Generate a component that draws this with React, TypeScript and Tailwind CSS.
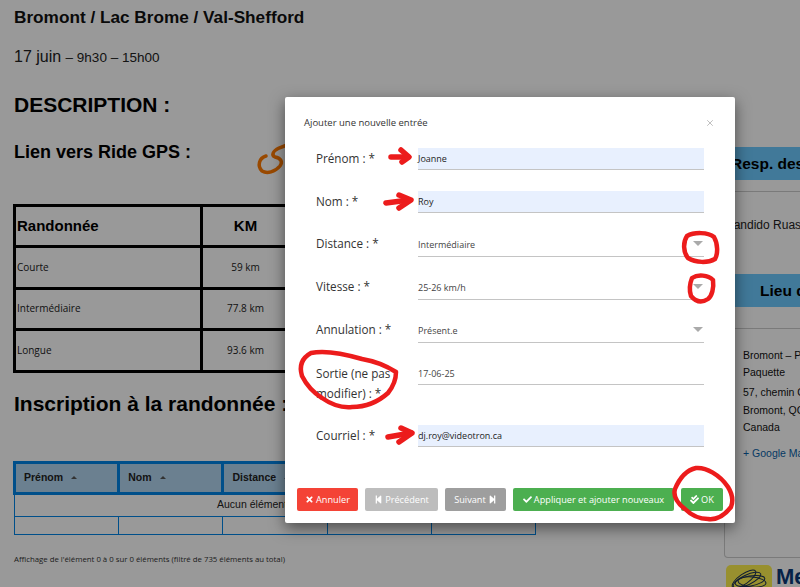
import { FaTimes, FaStepBackward, FaStepForward, FaCheck, FaCheckDouble } from 'react-icons/fa';
import { X } from 'lucide-react';
import type { ReactNode } from 'react';

function Sort() {
  return <span className="ml-2 inline-block align-middle w-0 h-0 border-x-[3px] border-x-transparent border-b-[3px] border-b-[#555]" />;
}

function Caret() {
  return <span className="mb-[2px] w-0 h-0 border-x-[5px] border-x-transparent border-t-[5px] border-t-[#aaa]" />;
}

function Field({ label, value, filled, caret, rowCls }: { label: ReactNode; value: string; filled?: boolean; caret?: boolean; rowCls: string }) {
  return (
    <div className={`flex items-start ${rowCls}`}>
      <div className="w-[102px] text-[11.7px] leading-[20px] text-[#333]">{label}</div>
      <div className={`w-[286px] flex items-center justify-between border-b border-[#c4c4c4] text-[9px] ${caret ? 'h-[24px]' : 'h-[22px]'} ${filled ? 'bg-[#e8f0fe] text-[#222]' : 'text-[#444]'}`}>
        <span>{value}</span>
        {caret && <span className="mr-[1px] flex"><Caret /></span>}
      </div>
    </div>
  );
}

function Btn({ cls, children }: { cls: string; children: ReactNode }) {
  return (
    <button className={`h-[23px] rounded-[2px] flex items-center justify-center gap-[2px] text-[9.2px] font-medium text-white ${cls}`}>
      {children}
    </button>
  );
}

export default function App() {
  const rows = [['Courte', '59 km'], ['Intermédiaire', '77.8 km'], ['Longue', '93.6 km']];

  return (
    <div className="relative w-[800px] h-[587px] overflow-hidden bg-white font-['Liberation_Sans',sans-serif] text-black">
      {/* page behind the dialog */}
      <div className="flex w-[1100px]">
        <div className="w-[724px] shrink-0 pl-[14px]">
          <div className="pt-[8px] text-[17.2px] leading-[18px] font-bold text-[#111]">Bromont / Lac Brome / Val-Shefford</div>
          <div className="mt-[22px] text-[16px] leading-[18px] text-[#222]">
            17 juin <span className="text-[13.5px]">– 9h30 – 15h00</span>
          </div>
          <div className="mt-[26px] text-[21px] leading-[24px] font-bold">DESCRIPTION :</div>
          <div className="mt-[25px] flex h-[36px] items-start">
            <span className="text-[18px] leading-[20px] font-bold">Lien vers Ride GPS :</span>
            <svg className="ml-[60px] -mt-[4px]" width="40" height="40" viewBox="0 0 40 40" fill="none" stroke="#ff7a00" strokeWidth="3.5" strokeLinecap="round">
              <path d="M15 18C8 20 6 28 11 33C16 36 24 34 29 28C32 24 30 20 24 19C20 17 22 13 28 10L36 7" />
            </svg>
          </div>

          <table className="-ml-px mt-[26px] w-[680px] border-collapse border-[3px] border-black">
            <thead>
              <tr className="h-[41px]">
                <th className="w-[187px] border-[3px] border-black pl-px text-left text-[15px] font-bold">Randonnée</th>
                <th className="w-[88px] border-[3px] border-black text-center text-[15px] font-bold">KM</th>
                <th className="border-[3px] border-black" />
              </tr>
            </thead>
            <tbody>
              {rows.map(([name, km]) => (
                <tr key={name} className="h-[41.5px] font-['Open_Sans',sans-serif] text-[10px] text-[#222]">
                  <td className="border-[3px] border-black pl-px">{name}</td>
                  <td className="border-[3px] border-black text-center">{km}</td>
                  <td className="border-[3px] border-black" />
                </tr>
              ))}
            </tbody>
          </table>

          <div className="mt-[19px] text-[21px] leading-[24px] font-bold">Inscription à la randonnée :</div>

          <table className="-ml-px mt-[45px] w-[524px] table-fixed border-collapse text-[10.5px]">
            <thead>
              <tr className="h-[31px] bg-[#b2d5f0] text-left font-bold text-[#222]">
                <th className="border-[3px] border-[#0084e6] pl-[8px]">Prénom<Sort /></th>
                <th className="border-[3px] border-[#0084e6] pl-[8px]">Nom<Sort /></th>
                <th className="border-[3px] border-[#0084e6] pl-[8px]">Distance<Sort /></th>
                <th className="border-[3px] border-[#0084e6]" />
                <th className="border-[3px] border-[#0084e6]" />
              </tr>
            </thead>
            <tbody>
              <tr className="h-[23px]">
                <td colSpan={5} className="border border-[#0084e6] text-center text-[#222]">Aucun élément à afficher</td>
              </tr>
              <tr className="h-[18px]">
                <td className="border border-[#0084e6]" />
                <td className="border border-[#0084e6]" />
                <td className="border border-[#0084e6]" />
                <td className="border border-[#0084e6]" />
                <td className="border border-[#0084e6]" />
              </tr>
            </tbody>
          </table>
          <div className="mt-[19px] font-['Open_Sans',sans-serif] text-[7.8px] leading-[11px] text-[#333]">
            Affichage de l'élément 0 à 0 sur 0 éléments (filtré de 735 éléments au total)
          </div>
        </div>

        <div className="w-[300px] shrink-0 pt-[147px]">
          <div className="h-[411px] rounded-b-[4px] border-x border-b border-[#ccc]">
            <div className="h-[33px] bg-[#6dcaff] pl-[6px] text-[15.5px] leading-[33px] font-bold whitespace-nowrap">Resp. des randonnées</div>
            <div className="mt-[11px] border-t border-[#ccc] pt-[26px] text-[12px] leading-[14px] whitespace-nowrap text-[#222]">Candido Ruas</div>
            <div className="mt-[42px] h-[33px] bg-[#6dcaff] pl-[35px] text-[15.5px] leading-[33px] font-bold whitespace-nowrap">Lieu de départ</div>
            <div className="mt-[21px] border-t border-[#ccc] pl-[18px] pt-[18px] text-[10.5px] leading-[17px] whitespace-nowrap text-[#111]">
              <div>Bromont – Parc</div>
              <div>Paquette</div>
              <div className="mt-[3px]">57, chemin Compton</div>
              <div className="mt-[1px]">Bromont, QC</div>
              <div>Canada</div>
              <div className="mt-[9px] text-[#0a5fa8]">+ Google Maps</div>
            </div>
          </div>
          <div className="mt-[7px] flex items-start gap-[4px] pl-[2px]">
            <svg width="46" height="46" viewBox="0 0 46 46" fill="none" className="shrink-0">
              <rect width="46" height="46" rx="5" fill="#fdf04f" />
              <g stroke="#1a2f55" strokeWidth="1">
                <ellipse cx="18" cy="14" rx="14" ry="5" transform="rotate(-35 18 14)" />
                <ellipse cx="21" cy="15" rx="15" ry="5" transform="rotate(-25 21 15)" />
                <ellipse cx="24" cy="16" rx="15" ry="5" transform="rotate(-10 24 16)" />
                <ellipse cx="26" cy="17" rx="14" ry="5" transform="rotate(5 26 17)" />
              </g>
            </svg>
            <span className="text-[22px] leading-[24px] font-bold text-[#0a3a78]">Me</span>
          </div>
        </div>
      </div>

      {/* backdrop */}
      <div className="absolute inset-0 bg-black/40" />

      {/* dialog */}
      <div className="absolute left-[285px] top-[97px] flex h-[426px] w-[450px] flex-col rounded-[2px] bg-white font-['Open_Sans',sans-serif] shadow-[0_5px_15px_rgba(0,0,0,0.5)]">
        <div className="flex items-center justify-between pl-[19px] pr-[20px] pt-[19px] text-[#333]">
          <span className="text-[9.5px] leading-[13px]">Ajouter une nouvelle entrée</span>
          <X size={10} strokeWidth={1.5} className="text-[#999]" />
        </div>
        <div className="ml-[31px] mt-[19px]">
          <Field label="Prénom : *" value="Joanne" filled rowCls="mb-[21px]" />
          <Field label="Nom : *" value="Roy" filled rowCls="mb-[20px]" />
          <Field label="Distance : *" value="Intermédiaire" caret rowCls="mb-[19px]" />
          <Field label="Vitesse : *" value="25-26 km/h" caret rowCls="mb-[19px]" />
          <Field label="Annulation : *" value="Présent.e" caret rowCls="mb-[20px]" />
          <Field label={<>Sortie (ne pas<br />modifier) : *</>} value="17-06-25" rowCls="h-[40px] mb-[22px]" />
          <Field label="Courriel : *" value="dj.roy@videotron.ca" filled rowCls="" />
        </div>
        <div className="mt-auto mb-[12px] flex gap-[7px] pl-[12px]">
          <Btn cls="w-[61px] bg-[#f44336]"><FaTimes className="text-[9px]" />Annuler</Btn>
          <Btn cls="w-[73px] bg-[#bdbdbd]"><FaStepBackward className="text-[9px]" />Précédent</Btn>
          <Btn cls="w-[61px] bg-[#9e9e9e]">Suivant<FaStepForward className="text-[9px]" /></Btn>
          <Btn cls="w-[161px] bg-[#4caf50]"><FaCheck className="text-[9px]" />Appliquer et ajouter nouveaux</Btn>
          <Btn cls="w-[42px] bg-[#4caf50]"><FaCheckDouble className="text-[9px]" />OK</Btn>
        </div>
      </div>

      {/* red marker annotations drawn on top of the screenshot */}
      <svg className="absolute inset-0" width="800" height="587" viewBox="0 0 800 587" fill="none" stroke="#ec1c1c" strokeLinecap="round" strokeLinejoin="round">
        <g strokeWidth="5.5">
          <path d="M391 157H408" />
          <path d="M401 150L409 157L402 162" />
          <path d="M386 203L409 200" />
          <path d="M399 195L411 200L399 208" />
          <path d="M388 437L411 433" />
          <path d="M401 428L412 433L399 442" />
        </g>
        <g strokeWidth="4.5">
          <path d="M687 236C694 232 708 232 714 237C718 244 718 254 715 259C708 263 696 263 688 258C683 252 683 242 687 236Z" />
          <path d="M692 278C698 274 708 275 713 280C714 288 712 296 708 299C702 303 696 302 691 296C689 290 690 283 692 278Z" />
          <path d="M396 372C385 365 374 361 362 359C345 354 325 350 311 353C302 358 299 366 302 376C307 386 314 393 322 398C332 405 342 408 352 407C366 407 378 402 388 393C392 388 396 380 396 372Z" />
          <path d="M696 468C706 467 720 475 728 487C733 495 733 502 731 507C724 516 716 520 708 519C698 519 691 515 685 509C677 503 673 496 675 489C680 477 687 470 696 468Z" />
        </g>
      </svg>
    </div>
  );
}
